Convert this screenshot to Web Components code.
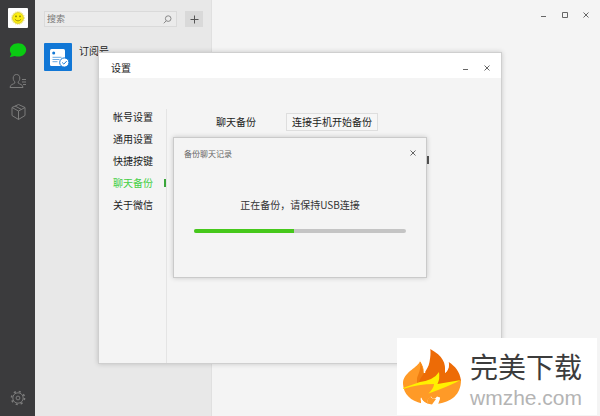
<!DOCTYPE html>
<html lang="zh-CN">
<head>
<meta charset="utf-8">
<meta name="viewport" content="width=device-width, initial-scale=1">
<title>设置</title>
<style>
  html, body { height: 100%; }
  body {
    margin: 0;
    overflow: hidden;
    background: #f4f4f4;
    color: #1c1c1c;
    font: 10px/16px "Noto Sans CJK SC", sans-serif;
  }
</style>
</head>
<body>
<chat-app></chat-app>

<script>
class WindowControls extends HTMLElement {
  constructor() {
    super();
    this.attachShadow({ mode: "open" });
  }
  connectedCallback() {
    const shapes = {
      min: ["最小化", '<path d="M1 5.5h5"/>'],
      max: ["最大化", '<path d="M1.5 1.5h5v5h-5z"/>'],
      close: ["关闭", '<path d="M1.5 1.5l5 5M6.5 1.5l-5 5"/>']
    };
    const buttons = this.getAttribute("show").split(" ").map(name => `
      <button type="button" aria-label="${shapes[name][0]}">
        <svg viewBox="0 0 8 8" width="8" height="8">${shapes[name][1]}</svg>
      </button>`).join("");
    this.shadowRoot.innerHTML = `
      <style>
        :host { display: flex; gap: 5px; }
        button {
          display: grid;
          place-items: center;
          width: 16px;
          height: 16px;
          padding: 0;
          border: 0;
          background: none;
        }
        svg { fill: none; stroke: #666; }
      </style>
      ${buttons}`;
  }
}
customElements.define("window-controls", WindowControls);

class NavRail extends HTMLElement {
  constructor() {
    super();
    this.attachShadow({ mode: "open" }).innerHTML = `
      <style>
        :host {
          display: flex;
          flex-direction: column;
          align-items: center;
          box-sizing: border-box;
          width: 35px;
          padding: 8px 0;
          background: #3b3b3d;
        }
        nav { display: flex; flex-direction: column; gap: 10px; margin-top: 13px; }
        button { display: block; padding: 0; border: 0; background: none; }
        svg { display: block; fill: none; stroke: #7c7c7c; }
        .settings { margin-top: auto; }
      </style>
      <button type="button" aria-label="头像">
        <svg viewBox="0 0 20 20" width="20" height="20">
          <rect width="20" height="20" rx="1" fill="#fff" stroke="none"/>
          <circle cx="10" cy="10" r="6.4" stroke="#f0df66" stroke-dasharray="1 1"/>
          <circle cx="10" cy="10" r="5.5" fill="#fbee13" stroke="#c9b800" stroke-width=".6"/>
          <path d="M8 7.6v1.6M12 7.6v1.6" stroke="#443c00"/>
          <path d="M6.8 11.2q3.2 3.4 6.4 0" stroke="#8a7800" stroke-width=".8"/>
        </svg>
      </button>
      <nav>
        <button type="button" aria-label="聊天">
          <svg viewBox="0 0 20 20" width="20" height="20">
            <path d="M10.2 2.2c4.7 0 8 2.9 8 6.6s-3.3 6.8-8 6.8c-1.3 0-2.4-.2-3.5-.6L1.7 16.2l1.7-3.3c-1-1.1-1.5-2.5-1.5-4.1 0-3.7 3.5-6.6 8.3-6.600z" fill="#0acb12" stroke="none"/>
          </svg>
        </button>
        <button type="button" aria-label="通讯录">
          <svg viewBox="0 0 20 20" width="20" height="20">
            <path d="M8.5 3.5c-2.1 0-3.3 1.4-3.3 3.5 0 1.9.6 2.9 1.6 3.8v1.3c-1.1 1-4.8 1.3-4.8 4.4h13c0-3.1-3.7-3.4-4.8-4.4v-1.3c1-.9 1.6-1.9 1.6-3.8 0-2.1-1.2-3.5-3.3-3.5zM14 8.5h4M14 11h4M15 13.5h3"/>
          </svg>
        </button>
        <button type="button" aria-label="收藏">
          <svg viewBox="0 0 20 20" width="20" height="20" stroke-linejoin="round">
            <path d="M10.500 3.500l6.500 3v8L10.500 18.500 4 14.500v-8zM4 6.500l6.500 3.500 6.500-3.500M10.500 10v8.500M7 5l6.500 3.500"/>
          </svg>
        </button>
      </nav>
      <button class="settings" type="button" aria-label="设置">
        <svg viewBox="0 0 20 20" width="20" height="20">
          <circle cx="10" cy="10" r="5.2"/>
          <circle cx="10" cy="10" r="1.9"/>
          <circle cx="10" cy="10" r="6.5" stroke-width="1.6" stroke-dasharray="2.1 3.005"/>
        </svg>
      </button>`;
  }
}
customElements.define("nav-rail", NavRail);

class ChatList extends HTMLElement {
  constructor() {
    super();
    this.attachShadow({ mode: "open" }).innerHTML = `
      <style>
        :host {
          display: block;
          box-sizing: border-box;
          width: 177px;
          padding: 11px 8px 8px 9px;
          background: #e8e8e8;
          border-right: 1px solid #e0e0e0;
        }
        form { display: flex; gap: 8px; }
        label {
          display: flex;
          flex: 1;
          align-items: center;
          box-sizing: border-box;
          height: 16px;
          min-width: 0;
          padding: 0 4px 0 2px;
          border: 1px solid #dadada;
          background: #ebebeb;
        }
        input {
          flex: 1;
          min-width: 0;
          padding: 0;
          border: 0;
          outline: 0;
          background: none;
          color: #777;
          font: inherit;
          font-size: 9px;
          line-height: 14px;
        }
        input::placeholder { color: #777; opacity: 1; }
        svg { display: block; fill: none; stroke: #888; }
        form button {
          display: grid;
          place-items: center;
          width: 18px;
          height: 16px;
          padding: 0;
          border: 0;
          background: #d9d9d9;
        }
        form button svg { stroke: #555; }
        ul { margin: 16px 0 0; padding: 0; list-style: none; }
        li { display: flex; gap: 7px; }
      </style>
      <form>
        <label>
          <input type="search" placeholder="搜索" aria-label="搜索">
          <svg viewBox="0 0 9 9" width="9" height="9"><circle cx="5.2" cy="3.6" r="2.8"/><path d="M3.2 5.8L.8 8.3"/></svg>
        </label>
        <button type="button" aria-label="添加">
          <svg viewBox="0 0 9 9" width="9" height="9"><path d="M4.5 .5v8M.5 4.5h8"/></svg>
        </button>
      </form>
      <ul>
        <li>
          <svg viewBox="0 0 28 28" width="28" height="28">
            <rect width="28" height="28" rx="1" fill="#1177d6" stroke="none"/>
            <rect x="6" y="6" width="15" height="17" rx="1.5" fill="#fff" stroke="none"/>
            <circle cx="9.7" cy="10" r="1.5" fill="#1177d6" stroke="none"/>
            <path d="M8.5 14.3h9M8.5 16.5h7M8.5 18.7h5" stroke="#6ca9e2"/>
            <circle cx="20.3" cy="19.5" r="4.6" fill="#fff" stroke="#1177d6"/>
            <path d="M18.2 19.5l1.6 1.6 2.9-3" stroke="#1177d6"/>
          </svg>
          <span>订阅号</span>
        </li>
      </ul>`;
  }
}
customElements.define("chat-list", ChatList);

class SettingsNav extends HTMLElement {
  constructor() {
    super();
    this.attachShadow({ mode: "open" }).innerHTML = `
      <style>
        :host { display: block; width: 53px; border-right: 1px solid #e4e4e4; }
        ul {
          display: grid;
          gap: 6px;
          margin: 0;
          padding: 0;
          list-style: none;
        }
        a { display: block; color: inherit; text-decoration: none; }
        a[aria-current] {
          color: #45cf45;
          background: linear-gradient(#3aa63a, #3aa63a) right center / 2px 8px no-repeat;
        }
      </style>
      <ul>
        <li><a href="#account">帐号设置</a></li>
        <li><a href="#general">通用设置</a></li>
        <li><a href="#shortcuts">快捷按键</a></li>
        <li><a href="#backup" aria-current="page">聊天备份</a></li>
        <li><a href="#about">关于微信</a></li>
      </ul>`;
  }
}
customElements.define("settings-nav", SettingsNav);

class SettingsWindow extends HTMLElement {
  constructor() {
    super();
    this.attachShadow({ mode: "open" }).innerHTML = `
      <style>
        :host {
          display: flex;
          flex-direction: column;
          box-sizing: border-box;
          border: 1px solid #cfcfcf;
          background: #f4f4f4;
          box-shadow: 0 0 5px rgba(0, 0, 0, .18);
        }
        header {
          display: flex;
          align-items: center;
          justify-content: space-between;
          height: 25px;
          padding: 0 6px 0 12px;
          background: #fff;
        }
        h1 { margin: 4px 0 0; font: inherit; }
        window-controls { margin-top: 4px; }
        .body { display: flex; flex: 1; gap: 49px; padding: 31px 14px 0; }
        .row { display: flex; align-items: center; gap: 30px; padding-top: 4px; }
        .row button {
          height: 18px;
          padding: 0 5px;
          border: 1px solid #dedede;
          background: #f6f6f6;
          color: inherit;
          font: inherit;
        }
        .mark { width: 2px; height: 8px; margin: 25px 0 0 211px; background: #555; }
      </style>
      <header>
        <h1>设置</h1>
        <window-controls show="min close"></window-controls>
      </header>
      <div class="body">
        <settings-nav></settings-nav>
        <section>
          <div class="row">
            <span id="backup">聊天备份</span>
            <button type="button" aria-describedby="backup">连接手机开始备份</button>
          </div>
          <div class="mark"></div>
        </section>
      </div>`;
  }
}
customElements.define("settings-window", SettingsWindow);

class BackupDialog extends HTMLElement {
  constructor() {
    super();
    this.attachShadow({ mode: "open" }).innerHTML = `
      <style>
        :host {
          display: block;
          box-sizing: border-box;
          border: 1px solid #cacaca;
          background: #f4f4f4;
          box-shadow: 0 0 5px rgba(0, 0, 0, .18);
        }
        header {
          display: flex;
          justify-content: space-between;
          padding: 7px 5px 0 10px;
        }
        h2 { margin: 0; color: #666; font: inherit; font-size: 8px; line-height: 18px; }
        label { display: block; margin-top: 34px; color: #333; text-align: center; }
        progress {
          display: block;
          width: calc(100% - 40px);
          height: 4px;
          margin: 16px auto 0;
          border: 0;
          border-radius: 2px;
          overflow: hidden;
          appearance: none;
          background: #c4c4c4;
        }
        progress::-webkit-progress-bar { background: #c4c4c4; }
        progress::-webkit-progress-value { background: #46c81b; }
      </style>
      <header>
        <h2>备份聊天记录</h2>
        <window-controls show="close"></window-controls>
      </header>
      <label for="progress">正在备份，请保持USB连接</label>
      <progress id="progress" max="100" value="47"></progress>`;
  }
}
customElements.define("backup-dialog", BackupDialog);

class SiteBadge extends HTMLElement {
  constructor() {
    super();
    this.attachShadow({ mode: "open" }).innerHTML = `
      <style>
        :host {
          display: flex;
          gap: 9px;
          box-sizing: border-box;
          padding: 8px 15px 5px 6px;
          background: #fff;
        }
        svg { display: block; flex: none; margin-top: 3px; }
        strong, span { display: block; white-space: nowrap; }
        strong { color: #3c3c3c; font-size: 28px; font-weight: 400; line-height: 40px; }
        span { color: #b4b4b4; font: 21px/24px "Liberation Sans", sans-serif; }
      </style>
      <svg viewBox="0 0 58 56" width="58" height="56">
        <path d="M17.3 11.5C15 19 2 22 0 33C-.5 44 7 52 19 54.5Q17 51 18 48.5Q20 53 24 54.5Q24 50 28 47.5Q31 52 34 47.5L37 48.5Q37 52 34 55C48 53 58 46 58 31L38 24L22 23Q20 17 17.3 11.5Z" fill="#ff9a27"/>
        <path d="M17.3 11.5Q18 19 15.5 25Q13 30 14.5 35L24 28Q20 24 17.3 11.5Z" fill="#f07c10"/>
        <path d="M27.3 0C40 7 43 14 42 24Q47 20 45.7 13C52 17 57 23 58 31.5L34 37L28 31L16 34C17 27 25 22 26.5 13Q28 5 27.3 0Z" fill="#ed6b06"/>
        <path d="M17.3 11.5Q22 16 21.5 24" fill="none" stroke="#fff" stroke-width="1.5"/>
        <path d="M42 24Q47 20 45.7 13Q45 16 42 18Z" fill="#fff"/>
        <path d="M0 39L17 33Q31 31 36 23Q37 30 34.5 35L58 31Q44 38 25.5 44.5Q31 39 31 35Q16 35 0 40Z" fill="#fff000"/>
        <path d="M18 48.5Q20 53 24 54.5L25 56L18 56Z" fill="#fff"/>
        <path d="M24 52L29 56L35 56L37 48.500L29.500 52.500Z" fill="#fff"/>
        <path d="M24 54.5Q24 50 27 47.5Q29 50 33 50L29 55.5Z" fill="#ff9a27"/>
      </svg>
      <div>
        <strong>完美下载</strong>
        <span>wmzhe.com</span>
      </div>`;
  }
}
customElements.define("site-badge", SiteBadge);

class ChatApp extends HTMLElement {
  constructor() {
    super();
    this.attachShadow({ mode: "open" }).innerHTML = `
      <style>
        :host { display: flex; position: relative; height: 100vh; }
        main { flex: 1; }
        main window-controls { justify-content: flex-end; padding: 7px 6px; }
        settings-window, backup-dialog, site-badge { position: absolute; }
        settings-window { top: 52px; left: 98px; width: 404px; height: 312px; }
        backup-dialog { top: 137px; left: 173px; width: 254px; height: 141px; }
        site-badge { right: 3px; bottom: 1px; }
      </style>
      <nav-rail></nav-rail>
      <chat-list></chat-list>
      <main>
        <window-controls show="min max close"></window-controls>
      </main>
      <settings-window></settings-window>
      <backup-dialog></backup-dialog>
      <site-badge></site-badge>`;
  }
}
customElements.define("chat-app", ChatApp);
</script>
</body>
</html>
